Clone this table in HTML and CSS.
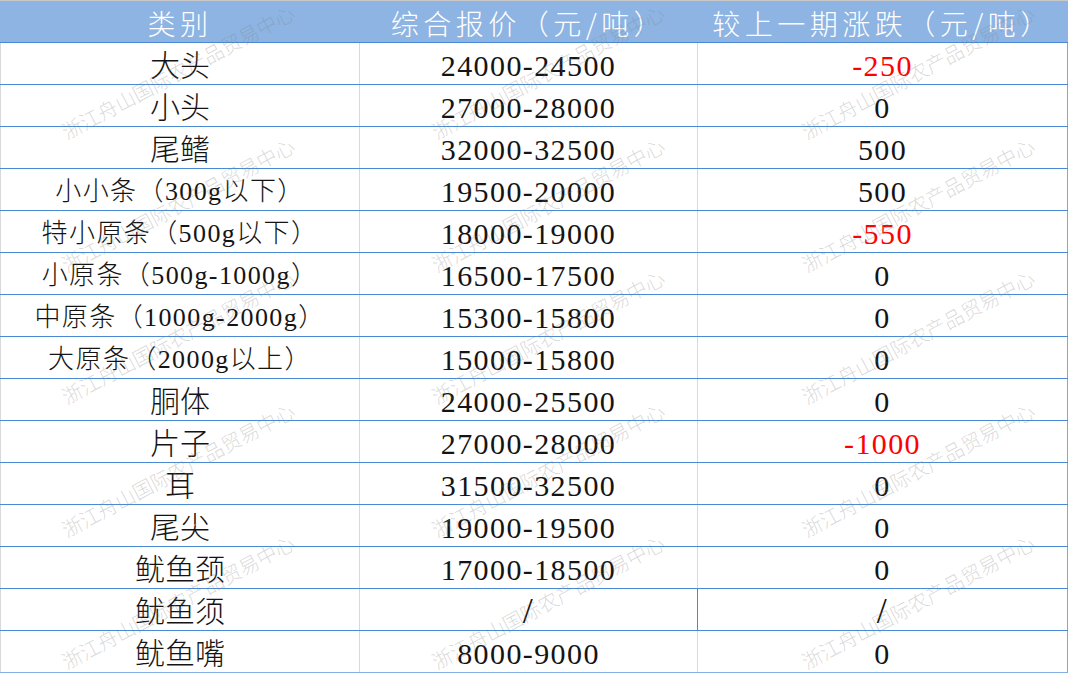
FILE: index.html
```html
<!DOCTYPE html>
<html lang="zh-CN">
<head>
<meta charset="utf-8">
<title>报价表</title>
<link rel="stylesheet" href="styles.css">
</head>
<body>
<div class="sheet">
  <div class="row head">
    <div class="cell c1">类别</div>
    <div class="cell c2">综合报价（元/吨）</div>
    <div class="cell c3">较上一期涨跌（元/吨）</div>
  </div>
  <div class="row"><div class="cell c1">大头</div><div class="cell c2 num">24000-24500</div><div class="cell c3 num down">-250</div></div>
  <div class="row"><div class="cell c1">小头</div><div class="cell c2 num">27000-28000</div><div class="cell c3 num">0</div></div>
  <div class="row"><div class="cell c1">尾鳍</div><div class="cell c2 num">32000-32500</div><div class="cell c3 num">500</div></div>
  <div class="row"><div class="cell c1 small">小小条（300g以下）</div><div class="cell c2 num">19500-20000</div><div class="cell c3 num">500</div></div>
  <div class="row"><div class="cell c1 small">特小原条（500g以下）</div><div class="cell c2 num">18000-19000</div><div class="cell c3 num down">-550</div></div>
  <div class="row"><div class="cell c1 small">小原条（500g-1000g）</div><div class="cell c2 num">16500-17500</div><div class="cell c3 num">0</div></div>
  <div class="row"><div class="cell c1 small">中原条（1000g-2000g）</div><div class="cell c2 num">15300-15800</div><div class="cell c3 num">0</div></div>
  <div class="row"><div class="cell c1 small">大原条（2000g以上）</div><div class="cell c2 num">15000-15800</div><div class="cell c3 num">0</div></div>
  <div class="row"><div class="cell c1">胴体</div><div class="cell c2 num">24000-25500</div><div class="cell c3 num">0</div></div>
  <div class="row"><div class="cell c1">片子</div><div class="cell c2 num">27000-28000</div><div class="cell c3 num down">-1000</div></div>
  <div class="row"><div class="cell c1">耳</div><div class="cell c2 num">31500-32500</div><div class="cell c3 num">0</div></div>
  <div class="row"><div class="cell c1">尾尖</div><div class="cell c2 num">19000-19500</div><div class="cell c3 num">0</div></div>
  <div class="row"><div class="cell c1">鱿鱼颈</div><div class="cell c2 num">17000-18500</div><div class="cell c3 num">0</div></div>
  <div class="row"><div class="cell c1">鱿鱼须</div><div class="cell c2 num blue-edge"><span class="slash">/</span></div><div class="cell c3 num"><span class="slash">/</span></div></div>
  <div class="row last"><div class="cell c1">鱿鱼嘴</div><div class="cell c2 num">8000-9000</div><div class="cell c3 num">0</div></div>

  <div class="watermarks" aria-hidden="true">
    <div class="wm"><span>浙江舟山国际农产品贸易中心</span></div>
    <div class="wm"><span>浙江舟山国际农产品贸易中心</span></div>
    <div class="wm"><span>浙江舟山国际农产品贸易中心</span></div>
    <div class="wm"><span>浙江舟山国际农产品贸易中心</span></div>
    <div class="wm"><span>浙江舟山国际农产品贸易中心</span></div>
    <div class="wm"><span>浙江舟山国际农产品贸易中心</span></div>
    <div class="wm"><span>浙江舟山国际农产品贸易中心</span></div>
    <div class="wm"><span>浙江舟山国际农产品贸易中心</span></div>
    <div class="wm"><span>浙江舟山国际农产品贸易中心</span></div>
    <div class="wm"><span>浙江舟山国际农产品贸易中心</span></div>
    <div class="wm"><span>浙江舟山国际农产品贸易中心</span></div>
    <div class="wm"><span>浙江舟山国际农产品贸易中心</span></div>
    <div class="wm"><span>浙江舟山国际农产品贸易中心</span></div>
    <div class="wm"><span>浙江舟山国际农产品贸易中心</span></div>
    <div class="wm"><span>浙江舟山国际农产品贸易中心</span></div>
  </div>
</div>
</body>
</html>
```

FILE: styles.css
```css
* { box-sizing: border-box; }

body {
  margin: 0;
  background: #ffffff;
}

.sheet {
  position: relative;
  width: 1068px;
  height: 673px;
  overflow: hidden;
  font-family: "Liberation Serif", "Noto Sans CJK SC", serif;
  font-weight: 300;
  color: #141414;
  background: #ffffff;
}

.row {
  display: grid;
  grid-template-columns: 360px 338px 370px;
  height: 42px;
  border-bottom: 1px solid #4a89d4;
}

.row.last {
  border-bottom-color: #86b0e4;
}

.cell {
  display: flex;
  align-items: center;
  justify-content: center;
  padding-top: 4px;
  font-size: 30px;
  line-height: 37px;
  white-space: nowrap;
  border-right: 1px solid #d9d9d9;
}

.c1 {
  border-left: 1px solid #d9d9d9;
}

.c3 {
  border-right-color: #7ea8de;
}

.cell.small {
  font-size: 26px;
  letter-spacing: 1.4px;
}

.num {
  letter-spacing: 1.4px;
}

.down {
  color: #ff0000;
}

.blue-edge {
  border-right-color: #4a89d4;
}

.slash {
  font-size: 36px;
}

.head {
  height: 43px;
  background: #8db4e2;
  border-top: 1px solid #c8c8c8;
}

.head .cell {
  color: #ffffff;
  font-family: "Noto Sans CJK SC", "Liberation Serif", sans-serif;
  font-size: 28px;
  letter-spacing: 4.5px;
  padding-top: 3px;
  border-left-color: #8db4e2;
  border-right-color: #8db4e2;
}

.watermarks {
  position: absolute;
  left: -7px;
  top: 6px;
  display: grid;
  grid-template-columns: repeat(3, 370px);
  grid-template-rows: repeat(5, 132.5px);
  pointer-events: none;
}

.wm {
  display: flex;
  align-items: center;
  justify-content: center;
}

.wm span {
  display: block;
  white-space: nowrap;
  font-family: "Noto Sans CJK SC", sans-serif;
  font-weight: 300;
  font-size: 20px;
  line-height: 20px;
  color: rgba(130, 130, 130, 0.3);
  transform: rotate(-28deg);
}
```
